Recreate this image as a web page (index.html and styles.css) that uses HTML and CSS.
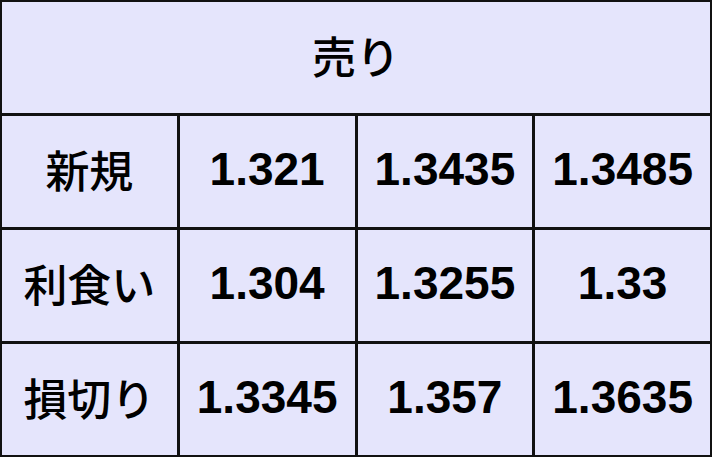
FILE: index.html
```html
<!DOCTYPE html>
<html lang="ja">
<head>
<meta charset="utf-8">
<link rel="stylesheet" href="styles.css">
</head>
<body>
<div class="table">
  <div class="cell head">売り</div>
  <div class="cell label">新規</div>
  <div class="cell num">1.321</div>
  <div class="cell num">1.3435</div>
  <div class="cell num">1.3485</div>
  <div class="cell label">利食い</div>
  <div class="cell num">1.304</div>
  <div class="cell num">1.3255</div>
  <div class="cell num">1.33</div>
  <div class="cell label">損切り</div>
  <div class="cell num">1.3345</div>
  <div class="cell num">1.357</div>
  <div class="cell num">1.3635</div>
</div>
</body>
</html>
```
FILE: styles.css
```css
html, body {
  margin: 0;
  padding: 0;
  background: #000;
}
.table {
  width: 712px;
  height: 457px;
  box-sizing: border-box;
  padding: 2px;
  display: grid;
  grid-template-columns: repeat(4, 1fr);
  grid-template-rows: repeat(4, 1fr);
  gap: 3px;
  background: #111;
}
.cell {
  background: #e5e5fc;
  display: flex;
  align-items: center;
  justify-content: center;
  color: #000;
  padding-bottom: 5px;
  box-sizing: border-box;
}
.head {
  grid-column: 1 / span 4;
  font-family: "Noto Sans CJK JP", sans-serif;
  font-weight: 500;
  font-size: 44px;
}
.label {
  font-family: "Noto Sans CJK JP", sans-serif;
  font-weight: 500;
  font-size: 44px;
}
.num {
  font-family: "Liberation Sans", Arial, sans-serif;
  font-weight: 700;
  font-size: 46px;
}
```
